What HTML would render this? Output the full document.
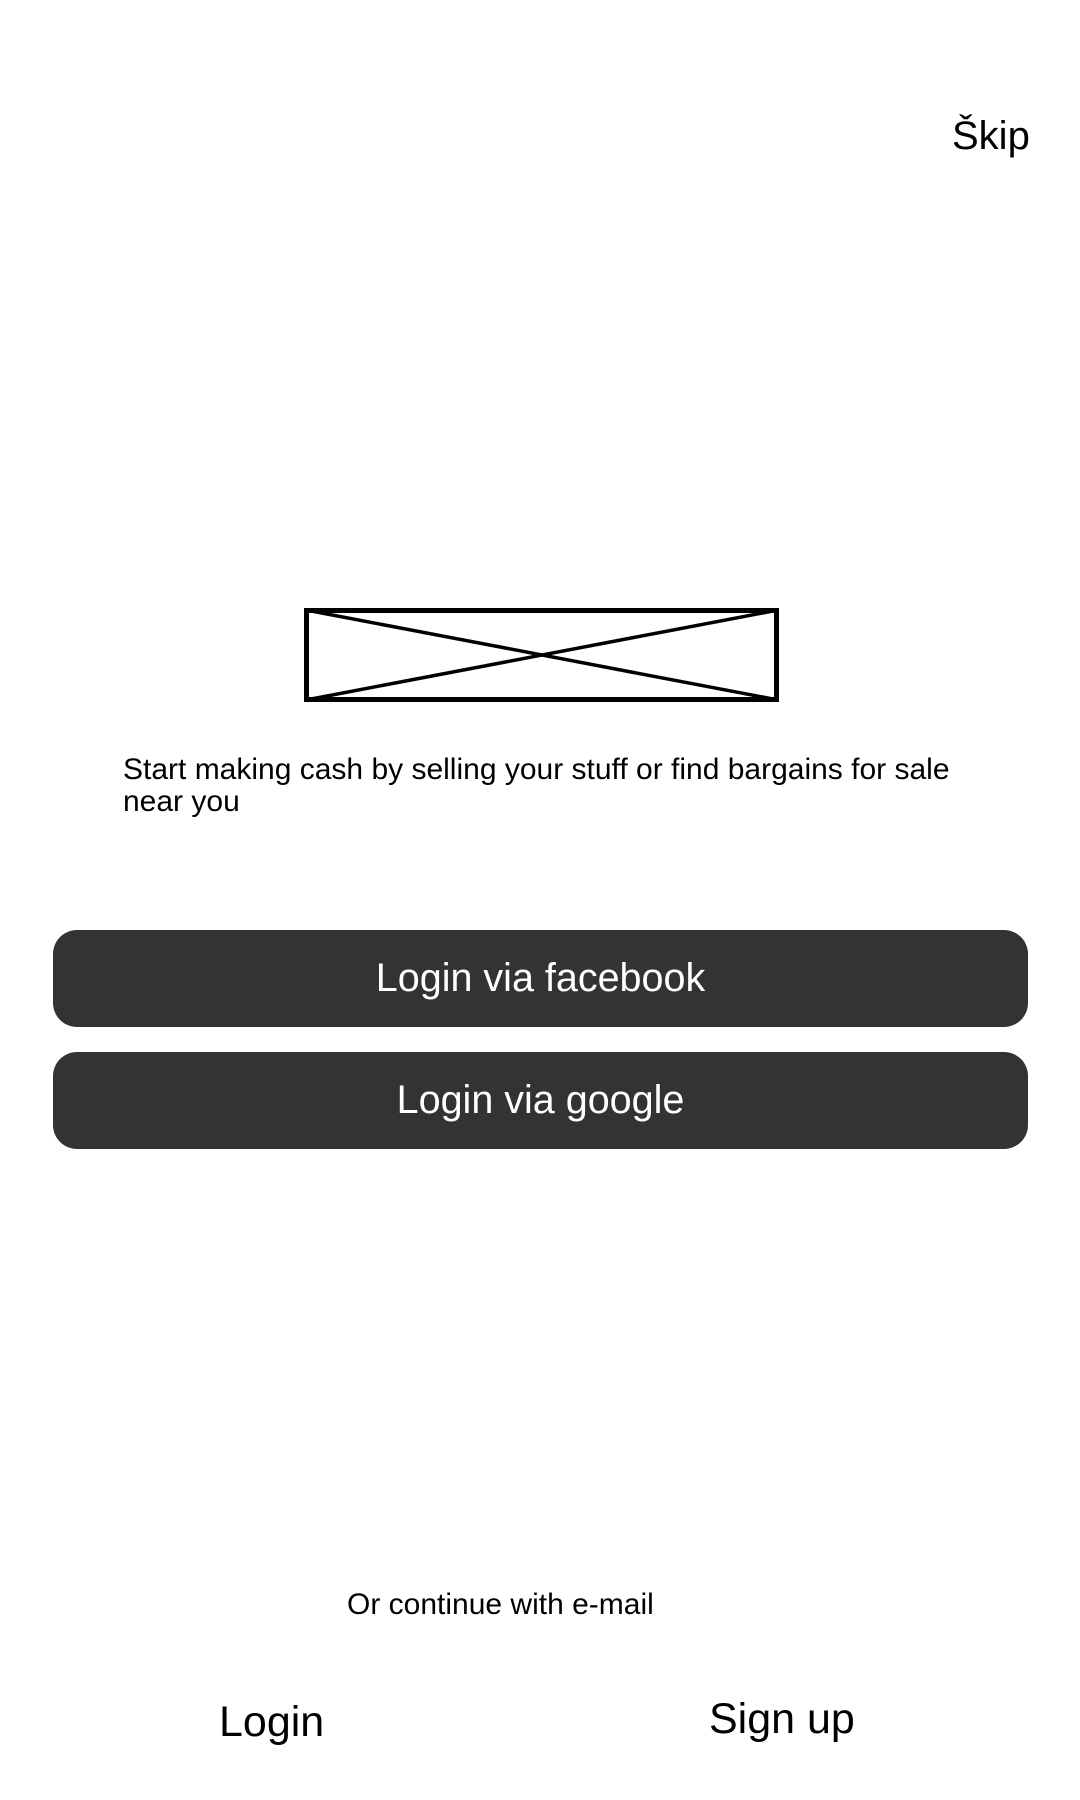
<!DOCTYPE html>
<html><head><meta charset="utf-8"><style>
html,body{margin:0;padding:0;background:#fff;}
body{width:1080px;height:1800px;position:relative;overflow:hidden;font-family:"Liberation Sans",Arial,sans-serif;color:#000;}
.a{position:absolute;white-space:nowrap;line-height:1.15;}
.btn{position:absolute;left:53px;width:975px;height:97px;background:#333;border-radius:24px;color:#fff;font-size:39.5px;display:flex;align-items:center;justify-content:center;}
</style></head><body>
<div class="a" style="left:952px;top:113px;font-size:40px;">Škip</div>
<svg style="position:absolute;left:304px;top:608px" width="476" height="94" viewBox="0 0 476 94">
<rect x="2.5" y="2.5" width="470" height="89" fill="none" stroke="#000" stroke-width="5"/>
<line x1="2" y1="2" x2="474" y2="92" stroke="#000" stroke-width="3.5"/>
<line x1="474" y1="2" x2="2" y2="92" stroke="#000" stroke-width="3.5"/>
</svg>
<div class="a" style="left:123px;top:754px;font-size:30px;line-height:32px;white-space:normal;width:850px;">Start making cash by selling your stuff or find bargains for sale near you</div>
<div class="btn" style="top:930px;">Login via facebook</div>
<div class="btn" style="top:1052px;">Login via google</div>
<div class="a" style="left:347px;top:1588px;font-size:30px;">Or continue with e-mail</div>
<div class="a" style="left:219px;top:1698px;font-size:43px;">Login</div>
<div class="a" style="left:709px;top:1695px;font-size:43px;">Sign up</div>
</body></html>
